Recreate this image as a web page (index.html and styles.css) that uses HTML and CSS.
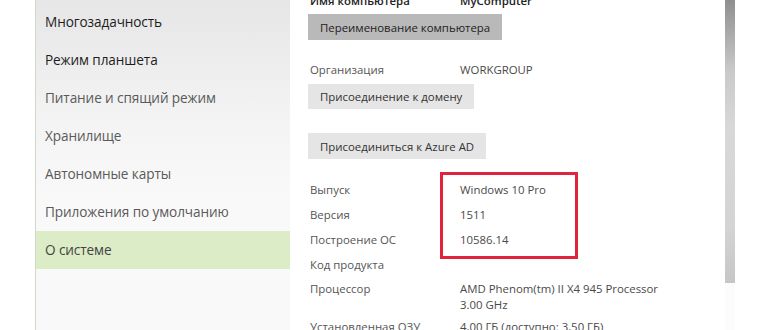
FILE: index.html
```html
<!DOCTYPE html>
<html lang="ru">
<head>
  <meta charset="UTF-8" />
  <meta name="viewport" content="width=device-width, initial-scale=1.0"/>
  <title>О системе</title>
  <link rel="stylesheet" href="styles.css">
</head>
<body>
  <div class="window">
    <div class="gutter"></div>

    <nav class="sidebar">
      <div class="nav-item dark">Многозадачность</div>
      <div class="nav-item dark">Режим планшета</div>
      <div class="nav-item">Питание и спящий режим</div>
      <div class="nav-item">Хранилище</div>
      <div class="nav-item">Автономные карты</div>
      <div class="nav-item">Приложения по умолчанию</div>
      <div class="nav-item active">О системе</div>
    </nav>

    <main class="content">
      <div class="row top-row">
        <span class="label">Имя компьютера</span>
        <span class="value">MyComputer</span>
      </div>
      <button class="btn primary">Переименование компьютера</button>

      <div class="row org-row">
        <span class="label">Организация</span>
        <span class="value">WORKGROUP</span>
      </div>
      <button class="btn">Присоединение к домену</button>
      <button class="btn azure">Присоединиться к Azure AD</button>

      <div class="specs">
        <div class="row"><span class="label">Выпуск</span><span class="value">Windows 10 Pro</span></div>
        <div class="row"><span class="label">Версия</span><span class="value">1511</span></div>
        <div class="row"><span class="label">Построение ОС</span><span class="value">10586.14</span></div>
        <div class="row"><span class="label">Код продукта</span><span class="value"></span></div>
        <div class="row cpu"><span class="label">Процессор</span><span class="value">AMD Phenom(tm) II X4 945 Processor<br>3.00 GHz</span></div>
        <div class="row"><span class="label">Установленная ОЗУ</span><span class="value">4,00 ГБ (доступно: 3,50 ГБ)</span></div>
      </div>

      <!-- red annotation frame -->
      <div class="highlight"></div>
    </main>

    <div class="scroll">
      <div class="thumb"></div>
    </div>
  </div>
</body>
</html>
```

FILE: styles.css
```css
body {
  margin: 0;
  font-family: 'Open Sans', 'Noto Sans', sans-serif;
  background: #fff;
  overflow: hidden;
}
.window {
  display: flex;
  height: 330px;
}
.gutter {
  width: 35px;
  background: #fff;
  border-right: 1px solid #d2d8c8;
}
.sidebar {
  width: 254px;
  padding-top: 3px;
  background: linear-gradient(to bottom, #e6e6e6 0%, #f3f3f3 35%, #f9f9f9 60%, #f9f9f9 100%);
}
.nav-item {
  height: 38px;
  line-height: 38px;
  padding-left: 9px;
  font-size: 13.6px;
  letter-spacing: -0.1px;
  color: #5a5a5a;
}
.nav-item.dark {
  color: #1e1e1e;
}
.nav-item.active {
  background: #dcecc6;
  color: #444;
}
.content {
  position: relative;
  width: 415px;
  padding-left: 20px;
  color: #555;
  font-size: 11.4px;
}
.row {
  display: flex;
  line-height: 17px;
  padding: 4px 0;
}
.row.cpu {
  line-height: 16px;
  padding-bottom: 1px;
}
.label {
  width: 150px;
  flex-shrink: 0;
}
.value {
  color: #4a4a4a;
}
.top-row {
  margin-top: -12px;
  color: #222;
  font-weight: 600;
}
.top-row .value {
  color: #222;
}
.btn {
  display: block;
  border: none;
  margin: 2px 0 0 -2px;
  padding: 0 12px;
  height: 25px;
  font-family: inherit;
  font-size: 11.4px;
  color: #333;
  background: #e5e5e5;
}
.btn.primary {
  background: #b9b9b9;
  color: #222;
  height: 26px;
  margin-top: 1px;
}
.org-row {
  margin-top: 17px;
}
.btn.azure {
  margin-top: 24px;
  height: 26px;
}
.specs {
  margin-top: 18px;
}
.highlight {
  position: absolute;
  left: 150px;
  top: 172px;
  width: 132px;
  height: 81px;
  border: 3px solid #e0243c;
}
.scroll {
  width: 10px;
  background: #fcfcfc;
}
.thumb {
  height: 283px;
  background: linear-gradient(to bottom, #8f8f8f 0%, #c9c9c9 25%, #d8d8d8 45%, #d4d4d4 80%, #c6c6c6 100%);
}
```
